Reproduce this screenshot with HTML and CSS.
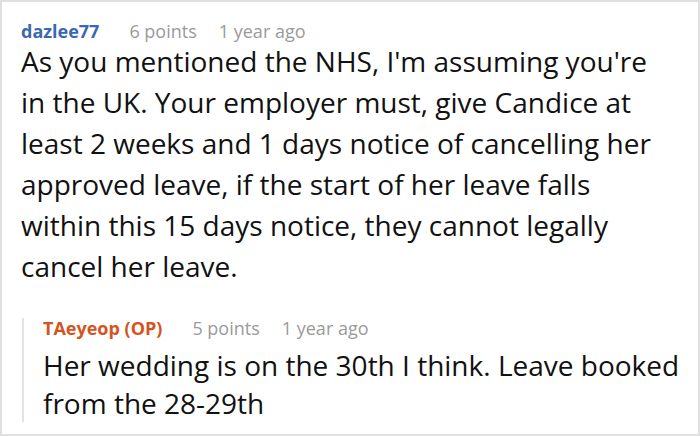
FILE: index.html
```html
<!DOCTYPE html>
<html>
<head>
<meta charset="utf-8">
<link rel="stylesheet" href="styles.css">
</head>
<body>
<div class="frame">
  <div class="comment">
    <div class="meta">
      <span class="user">dazlee77</span>
      <span class="info">6 points</span>
      <span class="info">1 year ago</span>
    </div>
    <p class="text main">As you mentioned the NHS, I'm assuming you're in the UK. Your employer must, give Candice at least 2 weeks and 1 days notice of cancelling her approved leave, if the start of her leave falls within this 15 days notice, they cannot legally cancel her leave.</p>
    <div class="reply">
      <div class="meta">
        <span class="user op">TAeyeop (OP)</span>
        <span class="info">5 points</span>
        <span class="info">1 year ago</span>
      </div>
      <p class="text reply-text">Her wedding is on the 30th I think. Leave booked from the 28-29th</p>
    </div>
  </div>
</div>
</body>
</html>
```
FILE: styles.css
```css
html, body {
  margin: 0;
  padding: 0;
  background: #fff;
}
body {
  font-family: "Open Sans", "Noto Sans", sans-serif;
}
.frame {
  width: 700px;
  height: 436px;
  box-sizing: border-box;
  border: 2px solid #e0e0e0;
  overflow: hidden;
}
.comment {
  padding: 19px 0 0 19px;
}
.meta {
  display: flex;
  align-items: baseline;
  gap: 22px;
  font-size: 18px;
  line-height: 20px;
}
.user {
  font-weight: 700;
  color: #3a68b3;
  margin-right: 8px;
}
.user.op {
  color: #d4541f;
}
.info {
  color: #9a9a9a;
}
.text {
  margin: 0;
  color: #111;
}
.main {
  font-size: 28px;
  line-height: 41px;
  width: 652px;
}
.reply {
  margin-top: 31px;
  margin-left: 1px;
  border-left: 2px solid #e3e3e3;
  padding-left: 19px;
}
.reply-text {
  font-size: 28px;
  line-height: 38px;
  margin-top: 8px;
  width: 640px;
}
```
